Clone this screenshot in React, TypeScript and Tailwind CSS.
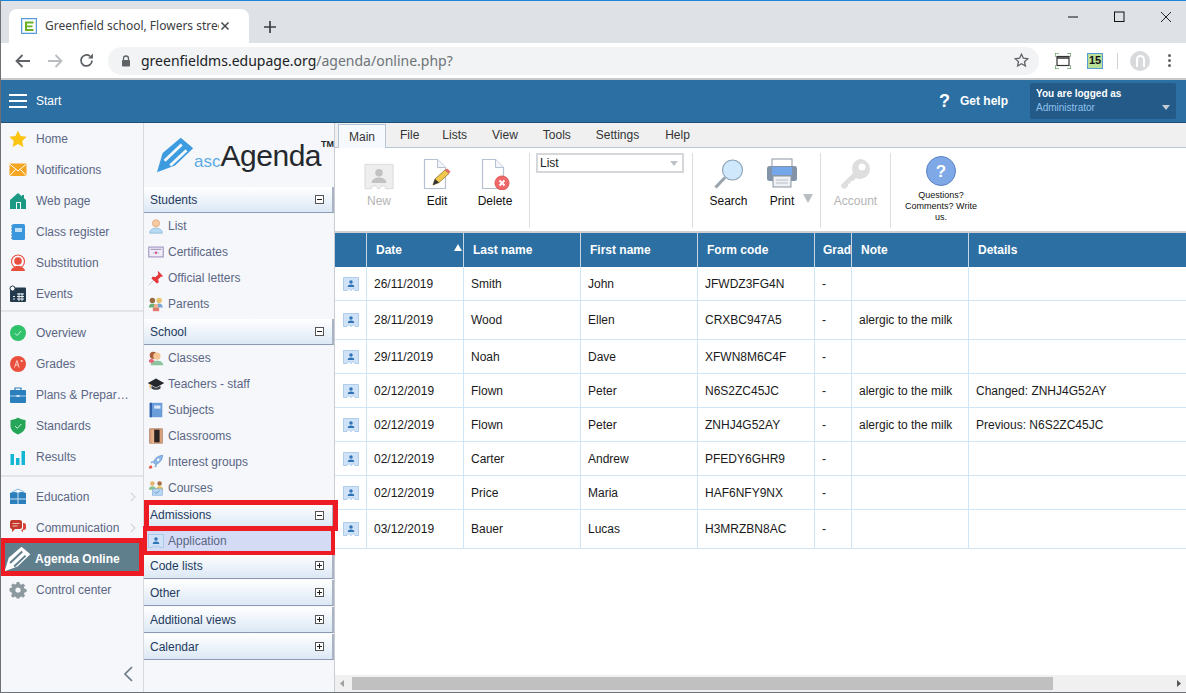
import React from "react";

const Ic = ({ children, w = 18, h = 18, vb = "0 0 18 18" }: { children: React.ReactNode; w?: number; h?: number; vb?: string }) => (
  <svg width={w} height={h} viewBox={vb} className="shrink-0">{children}</svg>
);

const icons: Record<string, React.ReactNode> = {
  star: <Ic><path d="M9 0.5l2.6 5.6 6.1.7-4.5 4.1 1.2 6-5.4-3-5.4 3 1.2-6L.3 6.8l6.1-.7z" fill="#fbc312" /></Ic>,
  mail: <Ic><rect x="0.5" y="2.5" width="17" height="12.5" fill="#f5a623" /><path d="M0.5 3l8.5 7 8.5-7M0.5 15l6-6.5M17.5 15l-6-6.5" stroke="#fff" strokeWidth="1" fill="none" /></Ic>,
  home: <Ic><path d="M9 1L1 8v9h16V8l-2-1.8V3h-2v1.5z" fill="#1a9a85" /><rect x="7" y="10" width="5" height="7" fill="#fff" /><rect x="8" y="11" width="3" height="6" fill="#1a9a85" /></Ic>,
  register: <Ic><rect x="3" y="1" width="13" height="16" rx="1.5" fill="#3b97dd" /><path d="M3 3h-1M3 6h-1M3 9h-1M3 12h-1M3 15h-1" stroke="#1d6ea8" strokeWidth="1" /><rect x="6" y="5" width="7" height="4" fill="#bfe0f7" /></Ic>,
  subst: <Ic><circle cx="9" cy="7.5" r="6.5" fill="none" stroke="#ea4f3d" strokeWidth="1.1" /><circle cx="9" cy="7" r="3.8" fill="#ea4f3d" /><path d="M2 17c0-3 4-4 5-5h4c1 1 5 2 5 5z" fill="#ea4f3d" /></Ic>,
  events: <Ic><rect x="1" y="2.5" width="16" height="14.5" rx="1" fill="#233a4d" /><rect x="1" y="1" width="5" height="5" rx="2.5" fill="#fff" stroke="#233a4d" /><path d="M8 9h7M8 11.5h7M8 14h7M4 11.5h2M4 14h2M10 8v8M13 8v8" stroke="#e6edf2" strokeWidth="1" /></Ic>,
  overview: <Ic><circle cx="9" cy="9" r="8" fill="#2fc26a" /><path d="M5.8 9.2l2.3 2.3 4-4.5" stroke="#cdf3db" strokeWidth="1" fill="none" /></Ic>,
  grades: <Ic><circle cx="9" cy="9" r="8" fill="#ea4f3d" /><path d="M5.5 12.5L8 5.5l2 7M6.5 10h3M11.5 6h2.5M12.7 5v2" stroke="#fbd9d4" strokeWidth="0.9" fill="none" /></Ic>,
  plans: <Ic><path d="M6 4V2h6v2" fill="none" stroke="#2b7fbd" strokeWidth="1.2" /><rect x="1" y="4" width="16" height="13" rx="1" fill="#2b7fbd" /><path d="M1 10h16" stroke="#cfe5f5" strokeWidth="0.8" /><rect x="7.5" y="9" width="3" height="2" fill="#cfe5f5" /></Ic>,
  shield: <Ic><path d="M9 .5C7 2 4 3 1.500 3v6c0 4 3.500 7 7.500 8.500 4-1.500 7.500-4.500 7.500-8.500V3C14 3 11 2 9 .5z" fill="#24a557" /><path d="M6 9l2.300 2.300 4-4.300" stroke="#c9efd7" strokeWidth="1" fill="none" /></Ic>,
  results: <Ic><rect x="1.500" y="6" width="3.500" height="11" fill="#13b6d3" /><rect x="7" y="10" width="3.500" height="7" fill="#13b6d3" /><rect x="12.500" y="3" width="3.500" height="14" fill="#13b6d3" /></Ic>,
  book: <Ic><path d="M1 5C4 3.500 7 3.500 9 5c2-1.500 5-1.500 8 0v11H1z" fill="#2b7fbd" /><path d="M9 5v11M1 11h16" stroke="#dcecf7" strokeWidth="0.9" /><path d="M3 4L9 1l6 3" fill="none" stroke="#6aa9d6" strokeWidth="0.8" /></Ic>,
  comm: <Ic><path d="M1 3c0-1 1-2 2-2h8c1 0 2 1 2 2v5c0 1-1 2-2 2H6l-3 3v-3c-1 0-2-1-2-2z" fill="#c4392d" /><path d="M7 11h5l2 2.500V11h1c1 0 2-1 2-2V6c0-1-1-2-2-2h-1v5c0 1-1 2-2 2z" fill="#d9493b" /><path d="M3.500 4.500h7M3.500 7h5" stroke="#f5cfca" strokeWidth="0.9" /></Ic>,
  gear: <Ic><path d="M7.500 1h3l.4 2.200 1.500.7 1.900-1.200 2.100 2.100-1.200 1.900.7 1.500 2.100.4v3l-2.100.4-.7 1.500 1.200 1.900-2.100 2.100-1.900-1.200-1.500.7-.4 1.500h-3l-.4-1.500-1.500-.7-1.900 1.200-2.100-2.100 1.200-1.900-.7-1.500L0 10.500v-3l2.100-.4.7-1.500L1.600 4.700l2.100-2.100 1.900 1.200 1.500-.7z" transform="scale(.95) translate(.5 0)" fill="#8c9aa0" /><circle cx="9" cy="9" r="2.600" fill="#f5f7fa" /></Ic>,
  list: <Ic><circle cx="9" cy="6" r="4" fill="#f6c9a0" stroke="#d9a06f" strokeWidth="0.7" /><path d="M2 17c0-4 3-5.500 7-5.500s7 1.500 7 5.500z" fill="#b8daf2" stroke="#7fb0d4" strokeWidth="0.7" /></Ic>,
  cert: <Ic><rect x="1" y="3.500" width="16" height="11" fill="#f1edf7" stroke="#8f7eb4" /><path d="M3 6h12" stroke="#8f7eb4" strokeWidth="1" /><path d="M9 8l1.500 1.500-1 2h-1l-1-2z" fill="#d7588a" /><path d="M5.500 10h2M10.500 10h2" stroke="#9cb3d9" strokeWidth="1" /></Ic>,
  pin: <Ic><path d="M1 17l6-6" stroke="#b9c2cc" strokeWidth="0.9" /><path d="M11 1l6 6-2.500.5-3 3 .5 3.500-2 1L4 9.500l1-2 3.500.5 3-3z" fill="#e5383b" /></Ic>,
  parents: <Ic><circle cx="5" cy="5" r="3" fill="#9a6b43" /><path d="M1 13c0-3 2-4.500 4-4.500s4 1.500 4 4.500z" fill="#6bb079" /><circle cx="12.500" cy="5" r="3" fill="#e8c16d" /><path d="M8.500 13c0-3 2-4.500 4-4.500s4 1.500 4 4.500z" fill="#7aa6d6" /><circle cx="9" cy="11" r="2.300" fill="#f2b68a" /><rect x="5.500" y="13" width="7" height="4" fill="#e07a6b" /></Ic>,
  classes: <Ic><circle cx="6" cy="6" r="4" fill="#a85f3c" /><circle cx="10" cy="7" r="4" fill="#f6c794" /><path d="M3 17c0-3.500 3-5 7-5s7 1.500 7 5z" fill="#8cc4a0" /><path d="M1 12c0-1.500 2-2 3-2s3 1 3 2-2 2.500-3 2.500-3-1-3-2.500z" fill="#e9667a" /></Ic>,
  cap: <Ic><path d="M9 3L0 8l9 5 9-5z" fill="#24282c" /><path d="M4 11v3c2 2 8 2 10 0v-3l-5 2.500z" fill="#3a3f44" /><path d="M2.500 9v5" stroke="#e5a33d" strokeWidth="1.200" /></Ic>,
  subj: <Ic><rect x="2" y="1" width="14" height="16" fill="#6b9ddb" /><rect x="2" y="1" width="2.500" height="16" fill="#2e5fa7" /><rect x="7" y="4" width="7" height="3.500" fill="#dbe8f8" /></Ic>,
  door: <Ic><rect x="2" y="1" width="14" height="16" fill="#d8a07c" stroke="#a86f4e" strokeWidth="0.7" /><rect x="6" y="2" width="7" height="14" fill="#2b2420" /><rect x="4" y="2" width="3" height="15" fill="#e5b48f" /></Ic>,
  rocket: <Ic><path d="M16.500 1.500c-5 .5-8.500 3-10.500 8l2.500 2.500c5-2 7.500-5.500 8-10.500z" fill="#8eb8e8" stroke="#4f86c6" strokeWidth="0.7" /><circle cx="11.500" cy="6.500" r="1.300" fill="#fff" /><path d="M3 9l3-1-1.500 3zM9 15l1-3-3 1.500z" fill="#6fa0d8" /><path d="M1 16c0-2 1-3.500 3-3l1 1.500c.5 1.500-2 2-4 1.500z" fill="#e8574a" /></Ic>,
  courses: <Ic><circle cx="5" cy="4" r="2.500" fill="#e7b36f" /><circle cx="13" cy="4" r="2.500" fill="#a9703f" /><path d="M1 11c0-3 2-4 4-4s4 1 4 4z" fill="#8cc48a" /><path d="M9 11c0-3 2-4 4-4s4 1 4 4z" fill="#e6c15a" /><rect x="5" y="10" width="11" height="7" fill="#b9d6f2" stroke="#6fa0d8" strokeWidth="0.6" /><path d="M7 13l2 2 4-3" stroke="#4f86c6" fill="none" strokeWidth="0.8" /></Ic>,
};

const Ticket = ({ w = 16, h = 14, bg = "#cfe2f7", bd = "#9cc0e6", fg = "#2f72b5" }: { w?: number; h?: number; bg?: string; bd?: string; fg?: string }) => (
  <svg width={w} height={h} viewBox="0 0 32 28" className="shrink-0">
    <path d="M1 1h30v26h-7c0-2-2-3-4-3s-3 1-3.500 3h-1c-.5-2-1.500-3-3.500-3s-4 1-4 3H1z" fill={bg} stroke={bd} strokeWidth="1.500" />
    <circle cx="16" cy="10" r="3.500" fill={fg} />
    <path d="M9.500 20c0-3.500 3-5 6.500-5s6.500 1.500 6.500 5z" fill={fg} />
  </svg>
);

const SideItem = ({ icon, label, chevron }: { icon: string; label: string; chevron?: boolean }) => (
  <div className="flex h-[31px] items-center pl-[8px] pr-[6px] text-[12px] text-[#5b6685]">
    {icons[icon]}
    <span className="ml-[9px] flex-1 truncate">{label}</span>
    {chevron && (
      <svg width="6" height="10" viewBox="0 0 6 10" className="mr-[1px]"><path d="M1 1l4 4-4 4" fill="none" stroke="#d3d7dc" strokeWidth="1.200" /></svg>
    )}
  </div>
);

const Sep = ({ cls }: { cls: string }) => <div className={`h-[2px] bg-[#e1e4e8] ${cls}`} />;

const Box = ({ plus }: { plus?: boolean }) => (
  <svg width="9" height="9" viewBox="0 0 9 9" className="shrink-0">
    <rect x="0.5" y="0.500" width="8" height="8" fill="#fff" stroke="#555" />
    <path d="M2 4.500h5" stroke="#222" />
    {plus && <path d="M4.500 2v5" stroke="#222" />}
  </svg>
);

const Head = ({ label, plus, cls = "" }: { label: string; plus?: boolean; cls?: string }) => (
  <div className={`flex h-[26px] shrink-0 items-center justify-between border-r-2 border-b border-r-[#aab4c4] border-b-[#8b9bb3] bg-gradient-to-b from-white to-[#dce8f5] pl-[6px] pr-[8px] text-[12px] text-[#243a5e] ${cls}`}>
    <span>{label}</span>
    <Box plus={plus} />
  </div>
);

const Sub = ({ icon, label }: { icon: string; label: string }) => (
  <div className="flex h-[26px] items-center pl-[4px] text-[12px] text-[#5b6685]">
    <span className="flex w-[16px] justify-center"><span className="scale-[0.9]">{icons[icon]}</span></span>
    <span className="ml-[4px]">{label}</span>
  </div>
);

const RibbonBtn = ({ label, w, icon, dim }: { label: string; w: string; icon: React.ReactNode; dim?: boolean }) => (
  <div className={`flex flex-col items-center ${w}`}>
    <div className="flex h-[34px] items-end justify-center">{icon}</div>
    <div className={`mt-[2px] text-[12px] ${dim ? "text-[#b4b4b4]" : "text-[#111]"}`}>{label}</div>
  </div>
);

const V = () => <div className="h-[75px] w-[1px] shrink-0 bg-[#dcdfe2]" />;

const Doc = ({ badge }: { badge: React.ReactNode }) => (
  <svg width="30" height="32" viewBox="0 0 30 32">
    <path d="M2.500 1.500h13l8 8v21h-21z" fill="#fff" stroke="#b6c2d2" strokeWidth="1.200" />
    <path d="M15.500 1.500v8h8" fill="#f3f5f8" stroke="#b6c2d2" strokeWidth="1" />
    {badge}
  </svg>
);

const cols = ["", "Date", "Last name", "First name", "Form code", "Grad", "Note", "Details"];
const colCls = ["w-[32px]", "w-[97px]", "w-[117px]", "w-[117px]", "w-[117px]", "w-[37px]", "w-[117px]", "flex-1"];
const rows: { h: string; c: string[] }[] = [
  { h: "h-[34px]", c: ["26/11/2019", "Smith", "John", "JFWDZ3FG4N", "-", "", ""] },
  { h: "h-[39px]", c: ["28/11/2019", "Wood", "Ellen", "CRXBC947A5", "-", "alergic to the milk", ""] },
  { h: "h-[34px]", c: ["29/11/2019", "Noah", "Dave", "XFWN8M6C4F", "-", "", ""] },
  { h: "h-[34px]", c: ["02/12/2019", "Flown", "Peter", "N6S2ZC45JC", "-", "alergic to the milk", "Changed: ZNHJ4G52AY"] },
  { h: "h-[34px]", c: ["02/12/2019", "Flown", "Peter", "ZNHJ4G52AY", "-", "alergic to the milk", "Previous: N6S2ZC45JC"] },
  { h: "h-[34px]", c: ["02/12/2019", "Carter", "Andrew", "PFEDY6GHR9", "-", "", ""] },
  { h: "h-[34px]", c: ["02/12/2019", "Price", "Maria", "HAF6NFY9NX", "-", "", ""] },
  { h: "h-[39px]", c: ["03/12/2019", "Bauer", "Lucas", "H3MRZBN8AC", "-", "", ""] },
];

const Pen = ({ w, h, c, s }: { w: number; h: number; c: string; s: string }) => (
  <svg width={w} height={h} viewBox="0 0 40 38">
    <path d="M1 37l6-20L26 1l13 11-19 18z" fill={c} />
    <path d="M9 25L27 8M15 30L32 14" stroke={s} strokeWidth="3" fill="none" />
  </svg>
);

export default function App() {
  return (
    <div className="relative flex h-[693px] w-[1186px] flex-col overflow-hidden border-t border-l border-b border-t-[#1a86d8] border-l-[#6e7276] border-b-[#6e7276] bg-white font-['Liberation_Sans',sans-serif]">
      {/* tab strip */}
      <div className="flex h-[42px] shrink-0 items-end bg-[#dee1e6] pl-[8px]">
        <div className="flex h-[34px] w-[240px] items-center rounded-t-[8px] bg-white pl-[12px] pr-[9px]">
          <svg width="16" height="16" viewBox="0 0 16 16" className="shrink-0">
            <rect x="0.500" y="0.500" width="15" height="15" fill="#cfe3f5" stroke="#5b9bd5" />
            <rect x="2" y="2" width="12" height="12" fill="#fff" />
            <path d="M4 3.500h8.500v2H6v2h5.500v1.700H6v1.800h6.500v2H4z" fill="#6ab023" />
          </svg>
          <span className="ml-[8px] w-[174px] overflow-hidden whitespace-nowrap font-['Noto_Sans',sans-serif] text-[12px] text-[#3c4043]">Greenfield school, Flowers street,</span>
          <svg width="10" height="10" viewBox="0 0 10 10" className="ml-[1px] shrink-0"><path d="M1.500 1.500l7 7M8.500 1.500l-7 7" stroke="#45494d" strokeWidth="1.500" /></svg>
        </div>
        <svg width="14" height="14" viewBox="0 0 14 14" className="mb-[9px] ml-[14px]"><path d="M7 1v12M1 7h12" stroke="#3c4043" strokeWidth="1.700" /></svg>
        <div className="flex-1" />
        <div className="mb-[19px] flex items-center">
          <svg width="46" height="14" viewBox="0 0 46 14"><path d="M0 7h10" stroke="#111" /></svg>
          <svg width="46" height="14" viewBox="0 0 46 14"><rect x="0.500" y="2" width="9.500" height="9.500" fill="none" stroke="#111" /></svg>
          <svg width="26" height="14" viewBox="0 0 26 14"><path d="M1 2l10 10M11 2L1 12" stroke="#222" /></svg>
        </div>
      </div>
      {/* address bar */}
      <div className="flex h-[37px] shrink-0 items-center border-b-2 border-b-[#c8c9cb] bg-white">
        <svg width="16" height="14" viewBox="0 0 16 14" className="ml-[14px]"><path d="M15 7H2M7.500 1L1.500 7l6 6" fill="none" stroke="#5f6368" strokeWidth="1.800" /></svg>
        <svg width="16" height="14" viewBox="0 0 16 14" className="ml-[16px]"><path d="M1 7h13M8.500 1l6 6-6 6" fill="none" stroke="#b9bcc0" strokeWidth="1.800" /></svg>
        <svg width="15" height="15" viewBox="0 0 15 15" className="ml-[16px]"><path d="M13 7.500A5.500 5.500 0 1 1 11 3.200" fill="none" stroke="#5f6368" strokeWidth="1.800" /><path d="M9 5.500h5v-5z" fill="#5f6368" /></svg>
        <div className="ml-[14px] flex h-[28px] w-[931px] items-center rounded-full bg-[#f1f3f4] pl-[13px] pr-[10px]">
          <svg width="10" height="12" viewBox="0 0 10 12"><path d="M2.500 5V3.500a2.500 2.500 0 0 1 5 0V5" fill="none" stroke="#5f6368" strokeWidth="1.300" /><rect x="1" y="5" width="8" height="6.500" rx="1" fill="#5f6368" /></svg>
          <span className="ml-[10px] flex-1 whitespace-nowrap font-['Noto_Sans',sans-serif] text-[14px] text-[#202124]">greenfieldms.edupage.org<span className="text-[#6f7378]">/agenda/online.php?</span></span>
          <svg width="15" height="15" viewBox="0 0 15 15"><path d="M7.500 1.200l1.900 4 4.400.5-3.300 3 .9 4.300-3.900-2.200L3.600 13l.9-4.300-3.300-3 4.400-.5z" fill="none" stroke="#5f6368" strokeWidth="1.300" /></svg>
        </div>
        <svg width="16" height="16" viewBox="0 0 16 16" className="ml-[16px]">
          <path d="M0 4V0h4M12 0h4v4M16 12v4h-4M4 16H0v-4" fill="none" stroke="#2e7d32" strokeWidth="1" />
          <rect x="2" y="3.500" width="12" height="9" fill="#fff" stroke="#333" strokeWidth="1.200" />
          <path d="M2 5h12" stroke="#333" strokeWidth="1.500" />
        </svg>
        <div className="ml-[16px] flex h-[16px] w-[16px] items-center justify-center border border-[#5b9bd5] bg-[#b9e09a] text-[11px] font-bold leading-none text-[#111]">15</div>
        <div className="ml-[14px] h-[16px] w-[1px] bg-[#d0d3d6]" />
        <div className="ml-[12px] flex h-[20px] w-[20px] items-center justify-center rounded-full bg-[#d8dadc]">
          <div className="h-[12px] w-[9px] rounded-t-full border-2 border-b-0 border-white" />
        </div>
        <div className="ml-[18px] flex flex-col gap-[2px]">
          <div className="h-[3px] w-[3px] rounded-full bg-[#5f6368]" />
          <div className="h-[3px] w-[3px] rounded-full bg-[#5f6368]" />
          <div className="h-[3px] w-[3px] rounded-full bg-[#5f6368]" />
        </div>
      </div>
      {/* app bar */}
      <div className="flex h-[43px] shrink-0 items-center border-b border-b-[#1f4f75] bg-[#2c6fa3] pl-[8px] text-white">
        <div className="flex w-[18px] flex-col gap-[4px]">
          <div className="h-[2px] bg-white" />
          <div className="h-[2px] bg-white" />
          <div className="h-[2px] bg-white" />
        </div>
        <span className="ml-[9px] text-[12px]">Start</span>
        <div className="flex-1" />
        <span className="mr-[10px] text-[18px] font-bold leading-none">?</span>
        <span className="text-[12px] font-bold">Get help</span>
        <div className="ml-[22px] mr-[10px] flex h-[36px] w-[146px] flex-col justify-center rounded-[2px] bg-[#235a87] px-[6px]">
          <div className="text-[10px] font-bold leading-[13px]">You are logged as</div>
          <div className="flex items-center justify-between text-[10px] leading-[15px] text-[#8fc0ee]">
            <span>Administrator</span>
            <svg width="8" height="5" viewBox="0 0 8 5"><path d="M0 0h8L4 5z" fill="#c3cbd3" /></svg>
          </div>
        </div>
      </div>
      {/* body */}
      <div className="flex min-h-0 flex-1">
        {/* left nav */}
        <div className="flex w-[143px] shrink-0 flex-col border-r border-r-[#d7d9dc] bg-[#f5f7fa]">
          <SideItem icon="star" label="Home" />
          <SideItem icon="mail" label="Notifications" />
          <SideItem icon="home" label="Web page" />
          <SideItem icon="register" label="Class register" />
          <SideItem icon="subst" label="Substitution" />
          <SideItem icon="events" label="Events" />
          <Sep cls="mb-[5px] mt-[1px]" />
          <SideItem icon="overview" label="Overview" />
          <SideItem icon="grades" label="Grades" />
          <SideItem icon="plans" label="Plans & Prepar…" />
          <SideItem icon="shield" label="Standards" />
          <SideItem icon="results" label="Results" />
          <Sep cls="mb-[4px] mt-[3px]" />
          <SideItem icon="book" label="Education" chevron />
          <SideItem icon="comm" label="Communication" chevron />
          <div className="flex h-[31px] items-center bg-[#5f7f8d] pl-[3px] text-[12px] font-bold text-white">
            <Pen w={27} h={26} c="#ffffff" s="#5f7f8d" />
            <span className="ml-[4px]">Agenda Online</span>
          </div>
          <SideItem icon="gear" label="Control center" />
          <div className="flex-1" />
          <div className="flex h-[36px] items-center justify-end pr-[10px]">
            <svg width="10" height="16" viewBox="0 0 10 16"><path d="M9 1L2 8l7 7" fill="none" stroke="#6d7b86" strokeWidth="1.700" /></svg>
          </div>
        </div>
        {/* second nav */}
        <div className="flex w-[191px] shrink-0 flex-col border-r border-r-[#c9cdd2] bg-[#f5f7fa]">
          <div className="flex h-[64px] shrink-0 items-center pl-[12px]">
            <Pen w={40} h={38} c="#3d9be0" s="#f5f7fa" />
            <span className="mt-[12px] text-[17px] leading-none text-[#5cabe5]">asc</span>
            <span className="mt-[2px] text-[30px] leading-none tracking-[-0.5px] text-[#25282c]">Agenda</span>
            <span className="mb-[22px] text-[9px] font-bold leading-none text-[#25282c]">TM</span>
          </div>
          <Head label="Students" />
          <Sub icon="list" label="List" />
          <Sub icon="cert" label="Certificates" />
          <Sub icon="pin" label="Official letters" />
          <Sub icon="parents" label="Parents" />
          <Head label="School" cls="mt-[2px]" />
          <Sub icon="classes" label="Classes" />
          <Sub icon="cap" label="Teachers - staff" />
          <Sub icon="subj" label="Subjects" />
          <Sub icon="door" label="Classrooms" />
          <Sub icon="rocket" label="Interest groups" />
          <Sub icon="courses" label="Courses" />
          <Head label="Admissions" cls="mt-[2px] !h-[25px]" />
          <div className="flex h-[25px] items-center bg-[#d4dcf5] pl-[4px] text-[12px] text-[#5b6685]">
            <Ticket />
            <span className="ml-[4px]">Application</span>
          </div>
          <Head label="Code lists" plus />
          <Head label="Other" plus cls="mt-[1px]" />
          <Head label="Additional views" plus cls="mt-[1px]" />
          <Head label="Calendar" plus cls="mt-[1px]" />
        </div>
        {/* content */}
        <div className="flex min-w-0 flex-1 flex-col">
          <div className="flex h-[25px] shrink-0 items-end border-b border-b-[#b6c6d8] bg-[#f0f0f0] pl-[3px] text-[12px] text-[#333]">
            <div className="flex h-[24px] w-[48px] items-center justify-center border-x border-t border-[#b6c6d8] bg-[#f6f9fd] -mb-px">Main</div>
            <div className="flex h-[24px] items-center">
              <span className="ml-[14px]">File</span>
              <span className="ml-[23px]">Lists</span>
              <span className="ml-[25px]">View</span>
              <span className="ml-[25px]">Tools</span>
              <span className="ml-[25px]">Settings</span>
              <span className="ml-[26px]">Help</span>
            </div>
          </div>
          <div className="flex h-[85px] shrink-0 items-start border-b-2 border-b-[#cfd2d5] bg-white pt-[5px]">
            <div className="flex pt-[3px] pl-[15px]">
              <RibbonBtn label="New" w="w-[58px]" dim icon={
                <svg width="30" height="27" viewBox="0 0 32 28"><path d="M1 1h30v26h-8c0-2-1-3-3-3s-3 1-3.500 3h-2c-.5-2-1.500-3-3.500-3s-3 1-3 3H1z" fill="#eeeeee" stroke="#d9d9d9" /><circle cx="16" cy="10" r="4" fill="#c2c2c2" /><path d="M8 21c0-4 4-6 8-6s8 2 8 6z" fill="#c2c2c2" /></svg>
              } />
              <RibbonBtn label="Edit" w="w-[58px]" icon={
                <Doc badge={<g><path d="M11 27l2-6 10-9 4 3.500-10 9z" fill="#f2c94c" stroke="#8a7430" strokeWidth="0.800" /><path d="M23 12l4 3.500 1.500-2-3.500-3z" fill="#e46a6a" /><path d="M11 27l2-6 4 3.500z" fill="#333" /></g>} />
              } />
              <RibbonBtn label="Delete" w="w-[58px]" icon={
                <Doc badge={<g><circle cx="22" cy="25" r="7" fill="#f06a6a" stroke="#d55" /><path d="M19.500 22.500l5 5M24.500 22.500l-5 5" stroke="#fff" strokeWidth="1.800" /></g>} />
              } />
            </div>
            <div className="ml-[5px]"><V /></div>
            <div className="ml-[6px] flex h-[20px] w-[148px] items-center justify-between border-2 border-[#d5d7da] pl-[2px] pr-[4px] text-[12px] text-[#222]">
              <span>List</span>
              <svg width="8" height="5" viewBox="0 0 8 5"><path d="M0 0h8L4 5z" fill="#bcc2c8" /></svg>
            </div>
            <div className="ml-[8px]"><V /></div>
            <div className="flex pt-[3px]">
              <RibbonBtn label="Search" w="w-[71px]" icon={
                <svg width="32" height="32" viewBox="0 0 32 32"><circle cx="19.500" cy="12" r="10" fill="#cfe8fb" stroke="#8aa0b5" strokeWidth="1.100" /><path d="M12 19.500L2.500 29.500" stroke="#9aa5ae" strokeWidth="3.200" /></svg>
              } />
              <RibbonBtn label="Print" w="w-[36px]" icon={
                <svg width="32" height="32" viewBox="0 0 32 32"><rect x="6" y="1" width="20" height="10" fill="#fff" stroke="#8c96a3" /><rect x="1" y="8" width="30" height="15" rx="2.500" fill="#8494a8" /><rect x="6" y="9" width="20" height="8" fill="#74a7ea" /><rect x="7" y="18" width="18" height="11" fill="#eef0f3" stroke="#8c96a3" /><path d="M10 22h12M10 25h12" stroke="#b9c0c9" /></svg>
              } />
              <svg width="10" height="9" viewBox="0 0 10 9" className="ml-[3px] mt-[38px]"><path d="M0 0h10L5 9z" fill="#b9bdc2" /></svg>
              <div className="w-[7px]" />
            </div>
            <V />
            <div className="flex pt-[3px]">
              <RibbonBtn label="Account" w="w-[69px]" dim icon={
                <svg width="32" height="32" viewBox="0 0 32 32"><path d="M20 1a10 10 0 0 1 0 20c-1.500 0-3-.3-4-1l-3 3h-2.500v2.500H8V28l-3 3-3.500-1.500L1 27l12-12a10 10 0 0 1 7-14z" fill="#dedede" /><circle cx="22" cy="9" r="3.500" fill="#fff" /></svg>
              } />
            </div>
            <V />
            <div className="flex w-[100px] flex-col items-center pt-[3px]">
              <div className="flex h-[30px] w-[30px] items-center justify-center rounded-full border border-[#5b82c4] bg-[#7ea9e6] text-[17px] font-bold leading-none text-white">?</div>
              <div className="mt-[4px] w-[80px] text-center text-[9px] leading-[11px] text-[#111]">Questions? Comments? Write us.</div>
            </div>
          </div>
          {/* table */}
          <div className="flex h-[34px] shrink-0 bg-[#2c6fa3] text-[12px] font-bold text-white">
            {cols.map((c, i) => (
              <div key={i} className={`relative flex items-center overflow-hidden whitespace-nowrap border-r border-r-[#c6d6e4] last:border-r-0 ${i === 5 ? "pl-[8px]" : "pl-[9px]"} ${colCls[i]}`}>
                {c}
                {i === 1 && <svg width="8" height="7" viewBox="0 0 8 7" className="absolute right-[1px] top-[11px]"><path d="M0 7h8L4 0z" fill="#fff" /></svg>}
              </div>
            ))}
          </div>
          <div className="min-h-0 flex-1 bg-white text-[12px] text-[#1a1a1a]">
            {rows.map((r, i) => (
              <div key={i} className={`flex border-b border-b-[#cfe6f8] ${r.h}`}>
                <div className={`flex items-center justify-center border-r border-r-[#cfe6f8] ${colCls[0]}`}><Ticket /></div>
                {r.c.map((t, j) => (
                  <div key={j} className={`flex items-center overflow-hidden whitespace-nowrap border-r border-r-[#cfe6f8] pl-[7px] last:border-r-0 ${colCls[j + 1]}`}>{t}</div>
                ))}
              </div>
            ))}
          </div>
          <div className="flex h-[17px] shrink-0 items-center bg-[#f0f0f0] px-[5px]">
            <svg width="4" height="7" viewBox="0 0 4 7"><path d="M4 0v7L0 3.500z" fill="#a0a0a0" /></svg>
            <div className="ml-[8px] h-[13px] w-[701px] bg-[#c0c0c0]" />
            <div className="flex-1" />
            <svg width="4" height="7" viewBox="0 0 4 7"><path d="M0 0v7l4-3.500z" fill="#555" /></svg>
          </div>
        </div>
      </div>
      {/* red annotation frames */}
      <div className="pointer-events-none absolute left-[-1px] top-[537px] h-[38px] w-[144px] border-[5px] border-[#ed1c24]" />
      <div className="pointer-events-none absolute left-[142px] top-[525px] h-[29px] w-[192px] border-[4px] border-[#ed1c24]" />
      <div className="pointer-events-none absolute left-[143px] top-[499px] h-[31px] w-[194px] border-[5px] border-[#ed1c24]" />
    </div>
  );
}
